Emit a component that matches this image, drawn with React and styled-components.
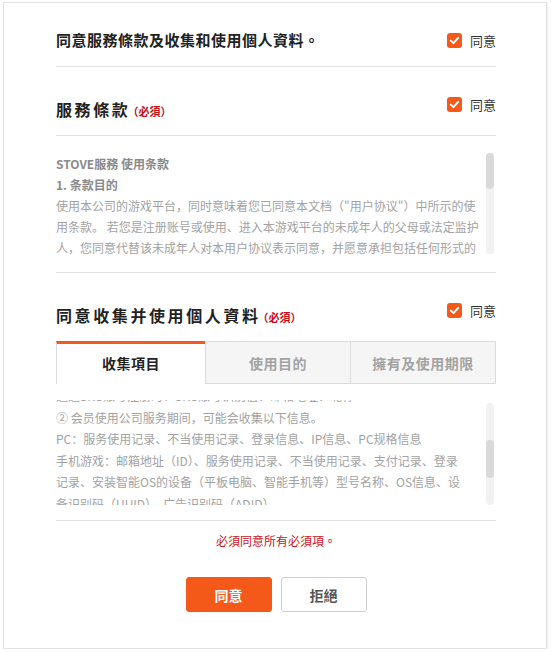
import React, { useLayoutEffect, useRef, useState, useCallback } from "react";
import styled, { createGlobalStyle } from "styled-components";

const GlobalStyle = createGlobalStyle`
  html, body { margin: 0; padding: 0; background: #fff; }
  body { font-family: "Noto Sans CJK TC", "Noto Sans CJK SC", sans-serif; }
  * { box-sizing: border-box; }
`;

const ORANGE = "#f4591a";

const Frame = styled.div`
  margin: 2px 0 0 3px;
  width: 544px;
  height: 647px;
  border: 1px solid #e2e2e2;
  box-shadow: 1px 1px 2px rgba(0, 0, 0, 0.06);
  background: #fff;
  padding: 0 50px 0 52px;
  display: flex;
  flex-direction: column;
`;

const SummaryRow = styled.div`
  display: flex;
  align-items: center;
  justify-content: space-between;
  padding: 27px 0 16px;
  border-bottom: 1px solid #e2e2e2;
`;

const SummaryTitle = styled.h1`
  margin: 0;
  font-size: 15px;
  line-height: 20px;
  font-weight: 700;
  letter-spacing: 0.5px;
  color: #222;
`;

const SectionHeader = styled.div`
  display: flex;
  align-items: flex-start;
  justify-content: space-between;
  padding: 30px 0 14px;
  border-bottom: ${(p) => (p.$divider ? "1px solid #e2e2e2" : "none")};
`;

const SectionTitle = styled.h2`
  margin: 0;
  height: 24px;
  font-size: 16px;
  line-height: 24px;
  font-weight: 700;
  letter-spacing: 2.6px;
  color: #222;
`;

const Required = styled.span`
  margin-left: -3px;
  font-size: 11px;
  line-height: 11px;
  font-weight: 700;
  letter-spacing: 0;
  color: #c80c18;
`;

const AgreeLabel = styled.label`
  display: flex;
  align-items: center;
  gap: 8px;
  font-size: 13px;
  line-height: 15px;
  color: #333;
  cursor: pointer;
`;

const PaneRow = styled.div`
  display: flex;
  height: 105px;
`;

const PaneContent = styled.div`
  flex: 0 0 430px;
  height: 100%;
  overflow-y: scroll;
  scrollbar-width: none;
  padding-right: ${(p) => p.$gutter}px;
  font-family: "Noto Sans CJK SC", sans-serif;
  font-size: 12px;
  line-height: ${(p) => p.$lh}px;
  color: #a2a2a2;
  &::-webkit-scrollbar {
    display: none;
  }
`;

const Track = styled.div`
  position: relative;
  flex: 0 0 8px;
  margin-top: ${(p) => p.$top}px;
  height: ${(p) => p.$height}px;
  background: #f2f2f2;
  border-radius: 4px;
`;

const Thumb = styled.div`
  position: absolute;
  left: 0;
  right: 0;
  background: #d9d9d9;
  border-radius: 4px;
`;

const TermsBody = styled.div`
  padding: 17px 0 14px;
  border-bottom: 1px solid #e2e2e2;
`;

const Heading = styled.div`
  font-weight: 700;
  color: #8a8a8a;
`;

const Para = styled.p`
  margin: 0;
`;

const Tabs = styled.div`
  display: grid;
  grid-template-columns: 149px 145px 1fr;
  height: 43px;
`;

const Tab = styled.button`
  display: flex;
  align-items: center;
  justify-content: center;
  margin: 0;
  font-family: "Noto Sans CJK TC", sans-serif;
  font-size: 14px;
  font-weight: 700;
  letter-spacing: 0.5px;
  cursor: pointer;
  background: ${(p) => (p.$active ? "#fff" : "#f5f5f5")};
  color: ${(p) => (p.$active ? "#222" : "#a3a3a3")};
  border: 1px solid #dcdcdc;
  border-top: ${(p) => (p.$active ? `3px solid ${ORANGE}` : "1px solid #dcdcdc")};
  border-bottom: ${(p) => (p.$active ? "none" : "1px solid #dcdcdc")};
  border-right: ${(p) => (p.$last ? "1px solid #dcdcdc" : "none")};
  padding: 0 0 ${(p) => (p.$active ? "3px" : "0")};
`;

const TabBody = styled.div`
  padding: 16px 0 15px;
  border-bottom: 1px solid #e2e2e2;
`;

const Footer = styled.div`
  display: flex;
  flex-direction: column;
  align-items: center;
  padding-top: 10px;
`;

const Notice = styled.p`
  margin: 0;
  font-size: 12px;
  line-height: 20px;
  color: #c8141e;
`;

const Buttons = styled.div`
  display: flex;
  gap: 9px;
  margin-top: 26px;
`;

const Button = styled.button`
  width: 86px;
  height: 35px;
  border-radius: 3px;
  font-family: "Noto Sans CJK TC", sans-serif;
  font-size: 14px;
  font-weight: 700;
  cursor: pointer;
  border: 1px solid ${(p) => (p.$primary ? ORANGE : "#cfcfcf")};
  background: ${(p) => (p.$primary ? ORANGE : "#fff")};
  color: ${(p) => (p.$primary ? "#fff" : "#555")};
`;

const CheckIcon = () => (
  <svg width="15" height="15" viewBox="0 0 15 15" aria-hidden="true">
    <rect x="0" y="0" width="15" height="15" rx="3" fill={ORANGE} />
    <path d="M3.8 7.6 L6.4 10.1 L11.2 4.9" fill="none" stroke="#fff" strokeWidth="2" strokeLinecap="round" strokeLinejoin="round" />
  </svg>
);

const Agree = () => (
  <AgreeLabel>
    <CheckIcon />
    同意
  </AgreeLabel>
);

function ScrollPane({ gutter, lh, trackTop, trackHeight, initialTop = 0, children }) {
  const ref = useRef(null);
  const [thumb, setThumb] = useState({ top: 0, height: 0 });
  const update = useCallback(() => {
    const el = ref.current;
    if (!el) return;
    const ratio = el.clientHeight / el.scrollHeight;
    setThumb({
      top: (el.scrollTop / el.scrollHeight) * trackHeight,
      height: Math.min(trackHeight, ratio * trackHeight),
    });
  }, [trackHeight]);
  useLayoutEffect(() => {
    if (ref.current) ref.current.scrollTop = initialTop;
    update();
  }, [initialTop, update]);
  return (
    <PaneRow>
      <PaneContent ref={ref} $gutter={gutter} $lh={lh} onScroll={update} lang="zh-CN">
        {children}
      </PaneContent>
      <Track $top={trackTop} $height={trackHeight}>
        <Thumb style={{ top: thumb.top, height: thumb.height }} />
      </Track>
    </PaneRow>
  );
}

export default function App() {
  return (
    <>
      <GlobalStyle />
      <Frame>
        <SummaryRow>
          <SummaryTitle>同意服務條款及收集和使用個人資料。</SummaryTitle>
          <Agree />
        </SummaryRow>

        <SectionHeader $divider>
          <SectionTitle>
            服務條款<Required>（必須）</Required>
          </SectionTitle>
          <Agree />
        </SectionHeader>
        <TermsBody>
          <ScrollPane gutter={3} lh={21} trackTop={0} trackHeight={101}>
            <Heading>STOVE服務 使用条款</Heading>
            <Heading>1. 条款目的</Heading>
            <Para>
              使用本公司的游戏平台，同时意味着您已同意本文档（"用户协议"）中所示的使用条款。 若您是注册账号或使用、进入本游戏平台的未成年人的父母或法定监护人，您同意代替该未成年人对本用户协议表示同意，并愿意承担包括任何形式的责任在内的一切法律责任。本用户协议适用于本公司提供的所有游戏及相关服务。
            </Para>
            <Heading>2. 条款的效力及变更</Heading>
            <Para>
              本条款在服务页面上公布或以其他方式通知会员后生效。公司在不违反相关法律的范围内可以变更本条款，变更时将提前公告变更内容及生效日期。会员不同意变更后的条款时，可以停止使用服务并申请注销会员资格。
            </Para>
            <Heading>3. 条款以外的规定</Heading>
            <Para>
              本条款未规定的事项，依照相关法律法规及公司另行制定的运营政策执行。如有需要，公司可制定单独的服务运营政策并予以公告。
            </Para>
          </ScrollPane>
        </TermsBody>

        <SectionHeader>
          <SectionTitle>
            同意收集并使用個人資料<Required>（必須）</Required>
          </SectionTitle>
          <Agree />
        </SectionHeader>
        <Tabs>
          <Tab $active>收集項目</Tab>
          <Tab>使用目的</Tab>
          <Tab $last>擁有及使用期限</Tab>
        </Tabs>
        <TabBody>
          <ScrollPane gutter={21} lh={21.5} trackTop={3} trackHeight={102} initialTop={101}>
            <Para>本公司为提供服务，收集以下个人信息。</Para>
            <Para>① 会员注册时收集的信息</Para>
            <Para>必须项目：邮箱地址（ID）、密码、昵称、出生日期、国家</Para>
            <Para>选择项目：手机号码、性别</Para>
            <Para>通过SNS账号注册时：SNS账号识别值、邮箱地址、昵称</Para>
            <Para>② 会员使用公司服务期间，可能会收集以下信息。</Para>
            <Para>PC：服务使用记录、不当使用记录、登录信息、IP信息、PC规格信息</Para>
            <Para>
              手机游戏：邮箱地址（ID）、服务使用记录、不当使用记录、支付记录、登录记录、安装智能OS的设备（平板电脑、智能手机等）型号名称、OS信息、设备识别码（UUID）、广告识别码（ADID）
            </Para>
            <Para>③ 使用付费服务时，可能会收集以下信息。</Para>
            <Para>信用卡信息、银行账户信息、手机号码、支付记录</Para>
            <Para>④ 客户咨询时：姓名、邮箱地址、联系方式、咨询内容</Para>
          </ScrollPane>
        </TabBody>

        <Footer>
          <Notice>必須同意所有必須項。</Notice>
          <Buttons>
            <Button $primary>同意</Button>
            <Button>拒絕</Button>
          </Buttons>
        </Footer>
      </Frame>
    </>
  );
}
